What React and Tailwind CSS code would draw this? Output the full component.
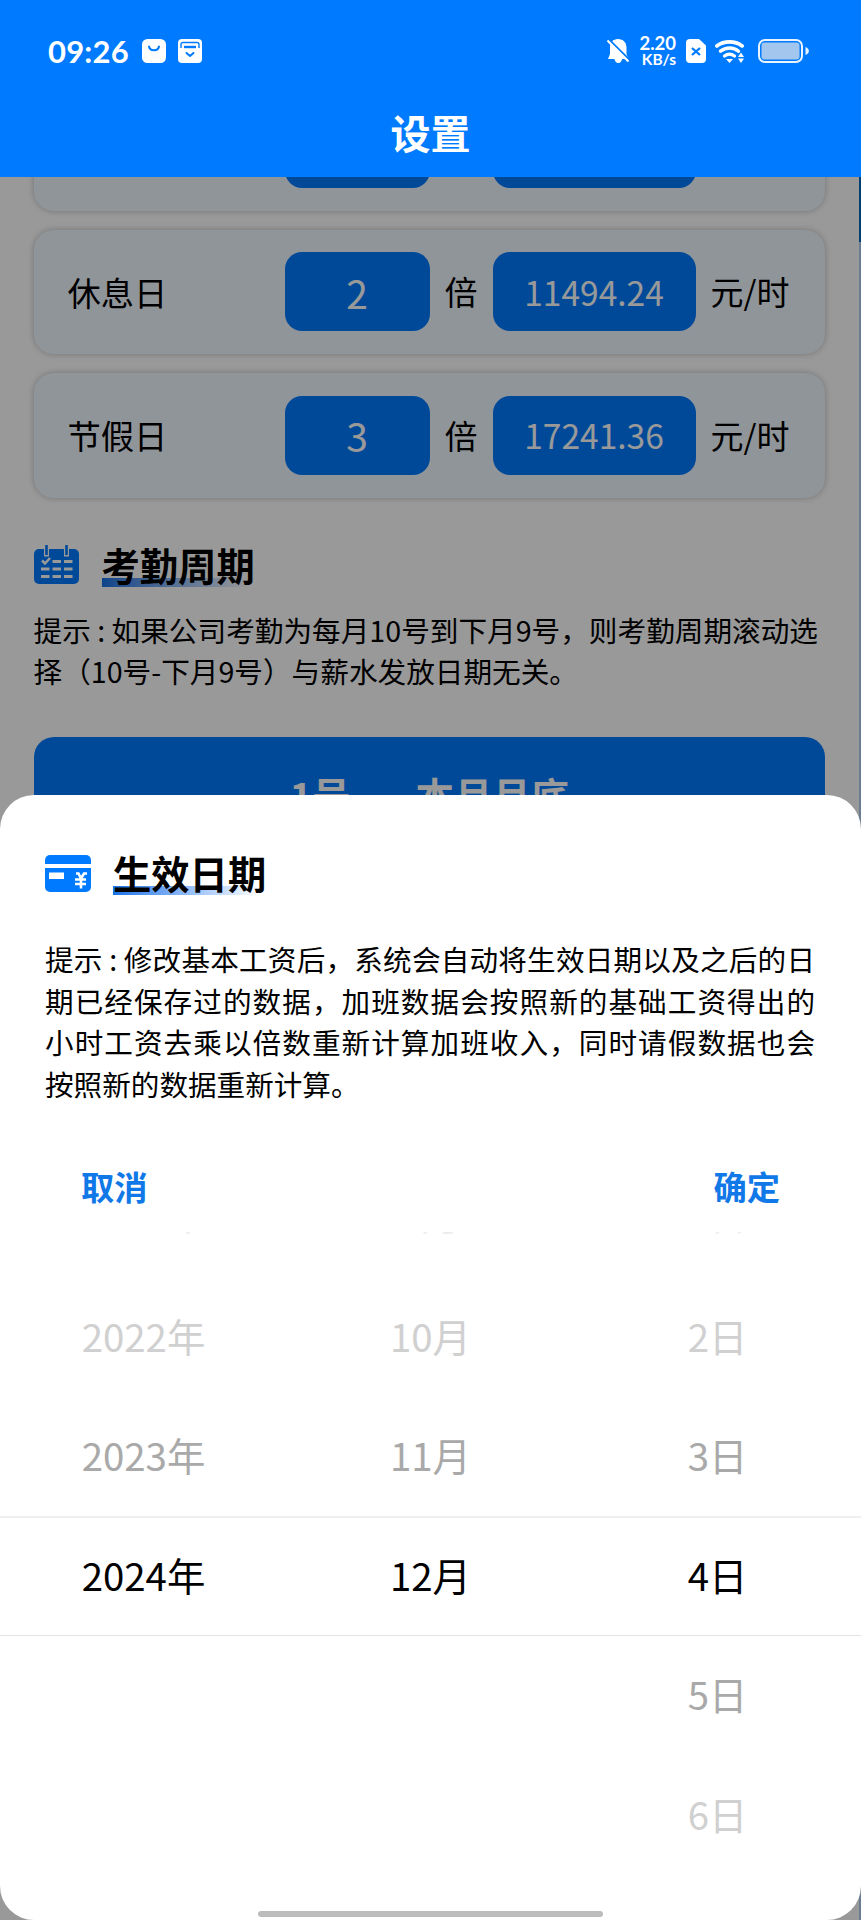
import React from 'react';
import clsx from 'clsx';

// the first card is scrolled under the header
const rates = [
  { id: 'workday', name: '', times: '', amount: '' },
  { id: 'restday', name: '休息日', times: '2', amount: '11494.24' },
  { id: 'holiday', name: '节假日', times: '3', amount: '17241.36' },
];

const columns = [
  ['2021年', '2022年', '2023年', '2024年', '', ''],
  ['9月', '10月', '11月', '12月', '', ''],
  ['1日', '2日', '3日', '4日', '5日', '6日'],
];

// text colour of every picker row, the selected one is black
const rowColors = [
  'text-[#ececec] pb-1',
  'text-[#d0d0d0]',
  'text-[#a9a9a9]',
  'text-black',
  'text-[#a9a9a9]',
  'text-[#d0d0d0]',
];

const StatusBar = () => (
  <div className="flex h-[102px] items-center pl-[48px] pr-[51px] font-['Lato',sans-serif] font-bold text-white">
    <span className="w-[94px] text-[31px] leading-none tracking-[0.2px]">09:26</span>
    <svg className="h-6 w-6" viewBox="0 0 24 24" fill="none">
      <rect width="24" height="24" rx="5.5" fill="#fff" />
      <path d="M7 7.5c1 5 9 5 10 0" stroke="#007bff" strokeWidth="2" strokeLinecap="round" />
    </svg>
    <svg className="ml-3 h-6 w-6" viewBox="0 0 24 24" fill="none">
      <rect width="24" height="24" rx="4" fill="#fff" />
      <path d="M3 9V5.5a2 2 0 0 1 2-2h14a2 2 0 0 1 2 2V9" stroke="#007bff" strokeWidth="1.4" />
      <path d="M6 8h12" stroke="#007bff" strokeWidth="2.4" />
      <path d="M8.5 14l3.5 3 3.5-3" stroke="#007bff" strokeWidth="2" strokeLinecap="round" strokeLinejoin="round" />
    </svg>
    <div className="ml-auto flex items-center">
      <svg className="h-6 w-[22px]" viewBox="0 0 22 24">
        <path d="M11 0c5 0 8.5 3.5 8.5 8.5V15l2 5H1l2-5V8.5C3 3.5 6 0 11 0z" fill="#fff" />
        <path d="M7 19h8.5c-.8 3-2 5-4.200 5s-3.500-2-4.300-5z" fill="#fff" />
        <path d="M0 -1.500L23 21.500" stroke="#007bff" strokeWidth="2" />
        <path d="M.5 1.500L21.500 22.500" stroke="#fff" strokeWidth="2" />
      </svg>
      <div className="ml-[9px] flex w-[38px] flex-col items-end whitespace-nowrap pb-px">
        <span className="text-[18.5px] leading-[17px]">2.20</span>
        <span className="text-[15.5px] leading-[14px]">KB/s</span>
      </div>
      <svg className="ml-[10px] h-6 w-5" viewBox="0 0 20 24">
        <path d="M4 0h9l7 6.500V20a4 4 0 0 1-4 4H4a4 4 0 0 1-4-4V4a4 4 0 0 1 4-4z" fill="#fff" />
        <path d="M6 9l8 7M14 9l-8 7" stroke="#007bff" strokeWidth="2.300" />
      </svg>
      <svg className="ml-[9px] h-6 w-[30px]" viewBox="0 0 30 24" fill="none">
        <path d="M1.800 7C9 1.500 20 1.500 27.200 7" stroke="#fff" strokeWidth="3.600" strokeLinecap="round" />
        <path d="M5.500 12.200c5.500-4.300 13-4.300 18 0" stroke="#fff" strokeWidth="3.400" strokeLinecap="round" />
        <path d="M9.500 17c3-2.300 7-2.300 10 0" stroke="#fff" strokeWidth="3.200" strokeLinecap="round" />
        <path d="M11 20h7L14.500 24z" fill="#fff" />
        <path d="M26 13.500l3 4.500h-6zM26 24l3-4.500h-6z" fill="#fff" />
      </svg>
      <svg className="ml-[13px] h-6 w-[52px]" viewBox="0 0 52 24" fill="none">
        <rect x="1" y="1" width="43" height="22" rx="6" stroke="#e9f4ff" strokeWidth="2" />
        <rect x="3.500" y="3.500" width="38" height="17" rx="3" fill="#a3c6ee" />
        <path d="M47.500 8c4.500 1.500 4.500 6.500 0 8z" fill="#e9f4ff" />
      </svg>
    </div>
  </div>
);

const CalendarIcon = () => (
  <svg className="h-10 w-[46px]" viewBox="0 0 46 40" fill="none">
    <rect y="4" width="45" height="35" rx="5" fill="#007bff" />
    <path d="M12.500 3v8.500M32.500 3v8.500" stroke="#fff" strokeWidth="5" />
    <path d="M12.500 0v10M32.500 0v10" stroke="#007bff" strokeWidth="2.600" />
    <path d="M8 15.500l3 3 5-5.500" stroke="#fff" strokeWidth="2.500" />
    <path d="M18.500 16.500h8.500M30 16.500h8.500M7 24h8.500M18.500 24h8.500M30 24h8.500M7 31.500h8.500M18.500 31.500h8.500M30 31.500h8.500" stroke="#fff" strokeWidth="3" />
  </svg>
);

const CardIcon = () => (
  <svg className="h-[37px] w-[46px]" viewBox="0 0 46 37" fill="none">
    <path d="M0 9V5a5 5 0 0 1 5-5h36a5 5 0 0 1 5 5v4z" fill="#007bff" />
    <path d="M0 13h46v19a5 5 0 0 1-5 5H5a5 5 0 0 1-5-5z" fill="#007bff" />
    <path d="M4 17.500h15v6.500H4z" fill="#fff" />
    <path d="M31 18.500l2.500 0 2.500 5 3-5h3M36 23v10.500M30 24.500h11M30 29h11" stroke="#fff" strokeWidth="2.600" />
  </svg>
);

const SectionTitle = ({ icon, children }) => (
  <div className="flex h-14 items-center">
    {icon}
    <div className="relative ml-[22px]">
      <div className="absolute bottom-[6px] left-0 h-[9px] w-[148px] bg-gradient-to-r from-[#1473e6] to-white"></div>
      <h2 className="relative text-[38.3px] font-bold leading-[56px] text-black">{children}</h2>
    </div>
  </div>
);

const RateCard = ({ rate }) => (
  <div className="flex h-[124.5px] shrink-0 items-center rounded-[20px] bg-[#f0f8ff] pl-[34px] shadow-[0_0_6px_rgba(0,0,0,0.25)]">
    <span className="w-[217px] text-[33.3px]">{rate.name}</span>
    <div className="flex h-[79px] w-[145px] items-center justify-center rounded-[17px] bg-[#007bff] text-[39px] text-white">{rate.times}</div>
    <span className="w-[63px] text-center text-[33px]">{rate.name && '倍'}</span>
    <div className="flex h-[79px] w-[203px] items-center justify-center rounded-[17px] bg-[#007bff] text-[33.5px] text-white">{rate.amount}</div>
    <span className="pl-[15px] text-[33px]">{rate.name && '元/时'}</span>
  </div>
);

const SettingsPage = () => (
  <div className="flex h-full w-full justify-between">
    <div className="ml-[33.5px] flex w-[791.5px] flex-col">
      <div className="-mt-[91px] flex flex-col gap-[19px]">
        {rates.map((rate) => (
          <RateCard key={rate.id} rate={rate} />
        ))}
      </div>
      <div className="mt-[39px]">
        <SectionTitle icon={<CalendarIcon />}>考勤周期</SectionTitle>
      </div>
      <div className="mt-[16px] whitespace-nowrap text-[28.65px] leading-[41.5px]">
        <p>提示 : 如果公司考勤为每月10号到下月9号，则考勤周期滚动选</p>
        <p>择（10号-下月9号）与薪水发放日期无关。</p>
      </div>
      <div className="mt-[45px] flex h-[118px] shrink-0 items-center justify-center gap-[65px] rounded-[20px] bg-[#007bff] text-[38.3px] font-bold leading-none text-white">
        <span>1号</span>
        <span>本月月底</span>
      </div>
    </div>
    {/* scroll indicator */}
    <div className="w-[2px] bg-[#b3cff0]">
      <div className="h-[65px] bg-[#006bbf]"></div>
    </div>
  </div>
);

const DatePicker = () => (
  <div className="relative h-[688px] overflow-hidden">
    <div className="-mt-[76.5px] grid grid-cols-3">
      {columns.map((items, i) => (
        <div key={i} className="flex flex-col">
          {items.map((item, row) => (
            <div key={row} className={clsx('flex h-[119.5px] items-center justify-center text-[38.4px] leading-none', rowColors[row])}>
              {item}
            </div>
          ))}
        </div>
      ))}
    </div>
    <div className="absolute left-0 top-[284px] h-[120px] w-full border-b border-t-2 border-b-[#e3e3e3] border-t-[#efefef]"></div>
  </div>
);

const EffectiveDateSheet = () => (
  <div className="absolute bottom-0 left-0 flex h-[1125px] w-full flex-col overflow-hidden rounded-[34px] bg-white">
    <div className="ml-[45px] mt-[50px]">
      <SectionTitle icon={<CardIcon />}>生效日期</SectionTitle>
    </div>
    <div className="ml-[45px] mt-[37px] w-[770px] whitespace-nowrap text-[28.6px] leading-[41.5px]">
      <p className="text-justify [text-align-last:justify]">提示 : 修改基本工资后，系统会自动将生效日期以及之后的日</p>
      <p className="text-justify [text-align-last:justify]">期已经保存过的数据，加班数据会按照新的基础工资得出的</p>
      <p className="text-justify [text-align-last:justify]">小时工资去乘以倍数重新计算加班收入，同时请假数据也会</p>
      <p>按照新的数据重新计算。</p>
    </div>
    <div className="mt-[52px] flex h-[60px] items-center justify-between px-[81px] text-[33.3px] font-bold leading-none text-[#1178e8]">
      <button>取消</button>
      <button>确定</button>
    </div>
    <div className="mt-[16px]">
      <DatePicker />
    </div>
    <div className="absolute bottom-[3px] left-[258px] h-[6px] w-[345px] rounded-full bg-[#bcbcbc]"></div>
  </div>
);

const App = () => {
  return (
    <div lang="zh-CN" className="relative flex h-[1920px] w-[861px] flex-col overflow-hidden bg-white font-['Noto_Sans_CJK_SC',sans-serif] text-black">
      <header className="h-[177px] shrink-0 bg-[#007bff]">
        <StatusBar />
        <h1 className="text-center text-[40px] font-bold leading-[60px] text-white">设置</h1>
      </header>
      <main className="relative flex-1 overflow-hidden">
        <SettingsPage />
        <div className="absolute inset-0 bg-black/40"></div>
      </main>
      <EffectiveDateSheet />
    </div>
  );
};

export default App;
